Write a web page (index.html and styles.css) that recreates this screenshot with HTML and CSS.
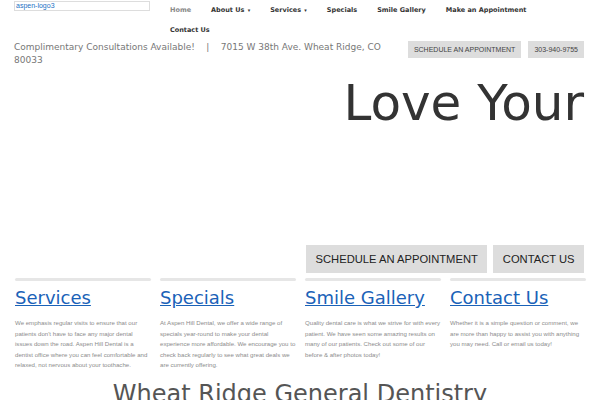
FILE: index.html
```html
<!DOCTYPE html>
<html lang="en">
<head>
    <meta charset="UTF-8">
    <meta name="viewport" content="width=device-width, initial-scale=1.0">
    <title>Aspen Hill Dental - Wheat Ridge General Dentistry</title>
    <link rel="stylesheet" href="styles.css">
</head>
<body>

<!-- Logo and main menu -->
<header class="top">
    <a class="logo" href="#">aspen-logo3</a>
    <nav class="menu">
        <ul>
            <li class="active"><a href="#">Home</a></li>
            <li><a href="#">About Us <span class="caret">&#9662;</span></a></li>
            <li><a href="#">Services <span class="caret">&#9662;</span></a></li>
            <li><a href="#">Specials</a></li>
            <li><a href="#">Smile Gallery</a></li>
            <li><a href="#">Make an Appointment</a></li>
            <li><a href="#">Contact Us</a></li>
        </ul>
    </nav>
</header>

<!-- Info bar -->
<div class="info">
    <p class="info-text">Complimentary Consultations Available! &nbsp;&nbsp; | &nbsp;&nbsp; 7015 W 38th Ave. Wheat Ridge, CO 80033</p>
    <div class="info-buttons">
        <a class="btn-sm" href="#">SCHEDULE AN APPOINTMENT</a>
        <a class="btn-sm" href="#">303-940-9755</a>
    </div>
</div>

<!-- Slider -->
<section class="hero">
    <h1>Love Your</h1>
    <div class="hero-buttons">
        <a class="btn" href="#">SCHEDULE AN APPOINTMENT</a>
        <a class="btn" href="#">CONTACT US</a>
    </div>
</section>

<!-- Feature boxes -->
<section class="boxes">
    <div class="box">
        <div class="bar"></div>
        <h3><a href="#">Services</a></h3>
        <p>We emphasis regular visits to ensure that our patients don't have to face any major dental issues down the road. Aspen Hill Dental is a dentist office where you can feel comfortable and relaxed, not nervous about your toothache.</p>
    </div>
    <div class="box">
        <div class="bar"></div>
        <h3><a href="#">Specials</a></h3>
        <p>At Aspen Hill Dental, we offer a wide range of specials year-round to make your dental experience more affordable. We encourage you to check back regularly to see what great deals we are currently offering.</p>
    </div>
    <div class="box">
        <div class="bar"></div>
        <h3><a href="#">Smile Gallery</a></h3>
        <p>Quality dental care is what we strive for with every patient. We have seen some amazing results on many of our patients. Check out some of our before &amp; after photos today!</p>
    </div>
    <div class="box">
        <div class="bar"></div>
        <h3><a href="#">Contact Us</a></h3>
        <p>Whether it is a simple question or comment, we are more than happy to assist you with anything you may need. Call or email us today!</p>
    </div>
</section>

<h2 class="title">Wheat Ridge General Dentistry</h2>

</body>
</html>
```

FILE: styles.css
```css
body {
    margin: 0;
    font-family: "DejaVu Sans", sans-serif;
    background-color: #fff;
    color: #333;
    overflow: hidden;
}
a {
    text-decoration: none;
}
.top {
    display: flex;
    align-items: flex-start;
    padding-left: 14px;
}
.logo {
    box-sizing: border-box;
    width: 136px;
    height: 10px;
    margin-top: 1px;
    padding-left: 1px;
    border: 1px solid #ddd;
    font-family: "Liberation Sans", Arial, sans-serif;
    font-size: 7px;
    line-height: 8px;
    color: #1a6fc4;
}
.menu {
    width: 400px;
    margin-left: 20px;
}
.menu ul {
    display: flex;
    flex-wrap: wrap;
    list-style: none;
    margin: 0;
    padding: 0;
}
.menu li {
    margin-right: 20px;
    font-size: 6.5px;
    line-height: 20px;
}
.menu a {
    font-weight: bold;
    color: #333;
}
.menu .active a {
    color: #888;
}
.caret {
    font-size: 5px;
    margin-left: 1px;
}
.info {
    display: flex;
    justify-content: space-between;
    align-items: flex-start;
    padding: 0 16px 0 14px;
}
.info-text {
    width: 380px;
    margin: 1px 0 0;
    font-size: 9px;
    line-height: 13px;
    color: #777;
}
.info-buttons {
    display: flex;
    gap: 7px;
    margin-top: 1px;
}
.btn-sm {
    padding: 0 6px;
    font-family: "Liberation Sans", Arial, sans-serif;
    font-size: 7px;
    line-height: 17px;
    background-color: #ddd;
    color: #444;
}
.hero {
    display: flex;
    flex-direction: column;
    align-items: flex-end;
    padding-right: 16px;
}
h1 {
    margin: 7px 0 0;
    font-size: 50px;
    font-weight: normal;
    color: #333;
}
.hero-buttons {
    display: flex;
    gap: 6px;
    margin-top: 113px;
}
.btn {
    padding: 0 9.5px;
    font-family: "Liberation Sans", Arial, sans-serif;
    font-size: 11.2px;
    line-height: 28px;
    background-color: #ddd;
    color: #222;
}
.boxes {
    display: grid;
    grid-template-columns: repeat(4, 136px);
    column-gap: 9px;
    padding-left: 15px;
    margin-top: 5px;
}
.bar {
    height: 3px;
    border-radius: 2px;
    background-color: #e6e6e6;
}
.box h3 {
    margin: 6px 0 0;
    font-size: 18px;
    font-weight: normal;
    line-height: 21px;
}
.box h3 a {
    color: #1a62b8;
    text-decoration: underline;
}
.box p {
    margin: 10px 0 0;
    font-family: "Liberation Sans", Arial, sans-serif;
    font-size: 6.1px;
    line-height: 10.5px;
    color: #8c8c8c;
}
.title {
    margin: 9px 0 0;
    text-align: center;
    font-size: 24px;
    font-weight: normal;
    line-height: 28px;
    color: #555;
}
```
